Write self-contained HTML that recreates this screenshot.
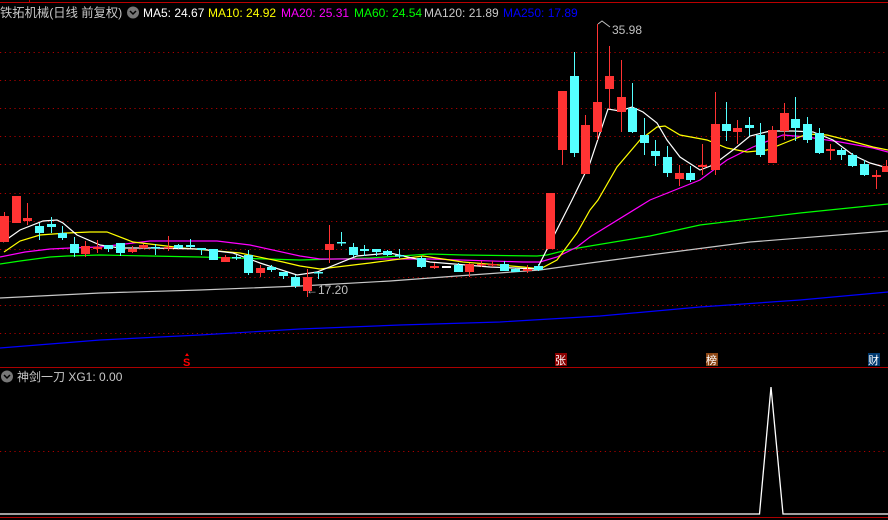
<!DOCTYPE html>
<html><head><meta charset="utf-8"><style>
html,body{margin:0;padding:0;background:#000;width:888px;height:520px;overflow:hidden}
svg{display:block}
text{font-family:"Liberation Sans","Noto Sans CJK SC",sans-serif}
</style></head><body>
<svg width="888" height="520" viewBox="0 0 888 520" xmlns="http://www.w3.org/2000/svg">
<rect width="888" height="520" fill="#000"/>
<line x1="0" y1="2.5" x2="888" y2="2.5" stroke="#b00" stroke-width="1"/>
<line x1="29.5" y1="0" x2="29.5" y2="3" stroke="#b00"/>
<g stroke="#a00" stroke-dasharray="1.2 3.6" stroke-width="1">
<line x1="0" y1="52.5" x2="888" y2="52.5"/><line x1="0" y1="80.5" x2="888" y2="80.5"/>
<line x1="0" y1="108.5" x2="888" y2="108.5"/><line x1="0" y1="136.5" x2="888" y2="136.5"/>
<line x1="0" y1="164.5" x2="888" y2="164.5"/><line x1="0" y1="193.5" x2="888" y2="193.5"/>
<line x1="0" y1="221.5" x2="888" y2="221.5"/><line x1="0" y1="249.5" x2="888" y2="249.5"/>
<line x1="0" y1="277.5" x2="888" y2="277.5"/><line x1="0" y1="305.5" x2="888" y2="305.5"/>
<line x1="0" y1="333.5" x2="888" y2="333.5"/><line x1="0" y1="451.5" x2="888" y2="451.5"/>
</g>
<g fill="none" stroke-width="1.2">
<polyline stroke="#0000ff" points="0,348 100,340 200,335 300,329 400,325 500,322 600,316 700,307 800,300 888,292"/>
<polyline stroke="#c8c8c8" points="0,298 100,293 200,290 300,286 390,281 457,276 540,270 590,263 650,255 750,242 888,231"/>
<polyline stroke="#00ff00" points="0,264 20,261 50,257 67,256 100,255 150,256 200,257 300,260 370,258 430,254 463,255 537,256 547,255 567,250 590,246 650,236 700,225 800,213 888,204"/>
<polyline stroke="#ff00ff" points="0,257 25,252 50,249 70,248 100,247 150,241 217,241 250,245 300,256 320,259 370,259 430,259 523,262 540,262 557,257 577,247 590,237 650,200 700,180 727,160 753,147 783,135 807,137 840,142 873,148 888,152"/>
<polyline stroke="#ffff00" points="4,252 20,241 40,235 67,233 90,232 107,232 133,242 183,248 240,253 283,262 300,266 320,269 370,263 423,256 463,262 523,267 540,269 557,260 577,233 590,210 598,200 617,167 640,140 657,127 665,126 680,135 707,140 727,148 747,152 767,150 787,142 807,134 827,135 847,140 873,147 888,150"/>
<polyline stroke="#ffffff" points="3,242 20,230 43,221 57,220 63,223 77,235 100,245 120,248 150,248 200,249 233,253 260,263 297,275 317,272 357,256 390,253 430,262 490,267 537,269 572,200 590,163 608,109 620,111 632,107 643,112 657,123 667,140 680,157 700,170 713,165 733,150 750,136 770,131 793,131 813,132 833,140 853,155 870,163 888,168"/>
</g>
<g id="c"></g>
<text x="612" y="34" fill="#c0c0c0" font-size="12">35.98</text>
<polyline points="598,24 602,21 610,27" fill="none" stroke="#c0c0c0"/>
<text x="306" y="294" fill="#c0c0c0" font-size="12">←17.20</text>
<text x="0" y="17" fill="#c8c8c8" font-size="12.3">铁拓机械(日线 前复权)</text>
<circle cx="133" cy="12.5" r="6" fill="#777"/><polyline points="130,11 133,14 136,11" fill="none" stroke="#000" stroke-width="1.5"/>
<text y="17" font-size="12"><tspan x="143" fill="#fff">MA5: 24.67</tspan><tspan x="208" fill="#ffff00">MA10: 24.92</tspan><tspan x="281" fill="#ff00ff">MA20: 25.31</tspan><tspan x="354" fill="#00ff00">MA60: 24.54</tspan><tspan x="424" fill="#c8c8c8">MA120: 21.89</tspan><tspan x="503" fill="#0000ff">MA250: 17.89</tspan></text>
<polygon points="187,353 185,356 189,356" fill="#f00"/>
<text x="183" y="366" fill="#f00" font-size="11" font-weight="bold">S</text>
<rect x="555" y="353" width="12" height="13" fill="#8b0000"/><text x="555" y="364" fill="#fff" font-size="11">张</text>
<rect x="706" y="353" width="12" height="13" fill="#8b4513"/><text x="706" y="364" fill="#fff" font-size="11">榜</text>
<rect x="868" y="353" width="12" height="13" fill="#003a70"/><text x="868" y="364" fill="#fff" font-size="11">财</text>
<line x1="0" y1="367.5" x2="888" y2="367.5" stroke="#a00"/>
<circle cx="7" cy="376.5" r="6" fill="#777"/><polyline points="4,375 7,378 10,375" fill="none" stroke="#000" stroke-width="1.5"/>
<text x="17" y="381" fill="#c8c8c8" font-size="12">神剑一刀 XG1: 0.00</text>
<polyline points="0,514 759.5,514 771,387 783,514 888,514" fill="none" stroke="#fff" stroke-width="1.3"/>
<line x1="0" y1="517.5" x2="888" y2="517.5" stroke="#a00"/>
</svg>
<script>
var R='#ff3333',C='#55ffff',W='#ffffff';
var d=[[4,216,242,212,242,R],[16,196,223,196,223,R],[27,218,221,203,225,R],[39,226,233,223,240,C],[51,224,227,217,233,C],[62,233,238,226,240,C],[74,244,253,237,257,C],[85,246,254,241,257,R],[97,247,249,240,253,R],[108,245,249,245,252,C],[120,243,253,243,256,C],[132,249,252,246,253,R],[143,245,248,244,249,R],[155,247,248,244,255,C],[168,247,248,236,251,R],[178,245,248,244,249,C],[190,245,247,239,248,C],[201,248,250,248,255,C],[213,249,260,249,260,C],[225,257,262,255,262,R],[236,257,258,255,260,C],[248,255,273,250,275,C],[260,268,273,265,277,R],[271,267,270,265,272,C],[283,272,276,272,279,C],[295,277,286,275,288,C],[307,277,291,269,297,R],[318,272,273,272,279,C],[329,244,250,225,263,R],[341,242,243,232,246,C],[353,247,255,243,257,C],[364,249,251,245,256,C],[376,249,252,249,256,C],[387,251,255,250,256,C],[399,255,256,249,258,C],[421,258,267,256,268,C],[434,266,268,263,269,R],[446,266,268,266,268,W],[458,265,272,263,272,C],[469,264,272,263,277,R],[481,264,265,261,267,R],[492,264,265,261,267,R],[504,264,271,261,271,C],[515,269,272,268,272,C],[527,269,271,265,273,R],[538,266,270,264,271,C],[550,193,249,193,249,R],[562,91,150,91,165,R],[574,76,153,52,157,C],[585,125,174,115,174,R],[597,102,132,24,140,R],[609,76,89,46,109,R],[621,97,112,60,132,R],[632,108,132,83,133,C],[644,135,143,118,155,C],[655,151,156,140,166,C],[667,157,173,146,177,C],[679,173,179,165,186,R],[690,173,180,166,182,C],[702,165,167,144,175,R],[715,124,170,92,175,R],[726,124,131,102,141,C],[737,128,132,120,144,R],[749,125,128,117,136,C],[760,135,155,123,157,C],[772,130,163,126,157,R],[784,113,131,103,140,R],[795,119,128,97,141,C],[807,124,140,117,143,C],[819,133,153,128,154,C],[830,149,151,144,160,R],[841,150,155,148,160,C],[852,155,166,153,167,C],[864,164,175,160,176,C],[876,175,177,170,189,R],[886,166,172,160,172,R]];
var s='';d.forEach(function(a){s+='<line x1="'+(a[0]+.5)+'" y1="'+a[3]+'" x2="'+(a[0]+.5)+'" y2="'+a[4]+'" stroke="'+a[5]+'"/>';s+='<rect x="'+(a[0]-4)+'" y="'+a[1]+'" width="9" height="'+Math.max(1.5,a[2]-a[1])+'" fill="'+a[5]+'"/>';});
document.getElementById('c').innerHTML=s;
</script>
</body></html>
